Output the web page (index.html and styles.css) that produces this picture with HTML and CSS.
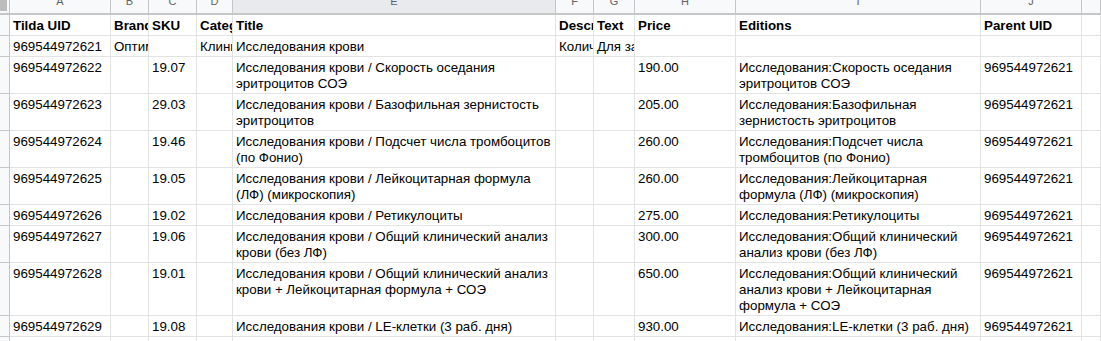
FILE: index.html
```html
<!DOCTYPE html>
<html lang="ru">
<head>
<meta charset="utf-8">
<title>Sheet</title>
<link rel="stylesheet" href="styles.css">
</head>
<body>
<div class="sheet">
  <div class="corner"></div>
  <div class="colhead">A</div><div class="colhead">B</div><div class="colhead">C</div><div class="colhead">D</div><div class="colhead sel">E</div><div class="colhead">F</div><div class="colhead">G</div><div class="colhead">H</div><div class="colhead">I</div><div class="colhead">J</div><div class="colhead"></div>

  <div class="rowhead"></div>
  <div class="c b">Tilda UID</div><div class="c b">Brand</div><div class="c b">SKU</div><div class="c b">Category</div><div class="c b">Title</div><div class="c b">Description</div><div class="c b">Text</div><div class="c b">Price</div><div class="c b">Editions</div><div class="c b">Parent UID</div><div class="c"></div>

  <div class="rowhead"></div>
  <div class="c">969544972621</div><div class="c">Оптимед</div><div class="c"></div><div class="c">Клинические</div><div class="c">Исследования крови</div><div class="c">Количество</div><div class="c">Для заказа</div><div class="c"></div><div class="c"></div><div class="c"></div><div class="c"></div>

  <div class="rowhead"></div>
  <div class="c">969544972622</div><div class="c"></div><div class="c">19.07</div><div class="c"></div><div class="c w">Исследования крови / Скорость оседания эритроцитов СОЭ</div><div class="c"></div><div class="c"></div><div class="c">190.00</div><div class="c w">Исследования:Скорость оседания эритроцитов СОЭ</div><div class="c">969544972621</div><div class="c"></div>

  <div class="rowhead"></div>
  <div class="c">969544972623</div><div class="c"></div><div class="c">29.03</div><div class="c"></div><div class="c w">Исследования крови / Базофильная зернистость эритроцитов</div><div class="c"></div><div class="c"></div><div class="c">205.00</div><div class="c w">Исследования:Базофильная зернистость эритроцитов</div><div class="c">969544972621</div><div class="c"></div>

  <div class="rowhead"></div>
  <div class="c">969544972624</div><div class="c"></div><div class="c">19.46</div><div class="c"></div><div class="c w">Исследования крови / Подсчет числа тромбоцитов (по Фонио)</div><div class="c"></div><div class="c"></div><div class="c">260.00</div><div class="c w">Исследования:Подсчет числа тромбоцитов (по Фонио)</div><div class="c">969544972621</div><div class="c"></div>

  <div class="rowhead"></div>
  <div class="c">969544972625</div><div class="c"></div><div class="c">19.05</div><div class="c"></div><div class="c w">Исследования крови / Лейкоцитарная формула (ЛФ) (микроскопия)</div><div class="c"></div><div class="c"></div><div class="c">260.00</div><div class="c w">Исследования:Лейкоцитарная формула (ЛФ) (микроскопия)</div><div class="c">969544972621</div><div class="c"></div>

  <div class="rowhead"></div>
  <div class="c">969544972626</div><div class="c"></div><div class="c">19.02</div><div class="c"></div><div class="c w">Исследования крови / Ретикулоциты</div><div class="c"></div><div class="c"></div><div class="c">275.00</div><div class="c w">Исследования:Ретикулоциты</div><div class="c">969544972621</div><div class="c"></div>

  <div class="rowhead"></div>
  <div class="c">969544972627</div><div class="c"></div><div class="c">19.06</div><div class="c"></div><div class="c w">Исследования крови / Общий клинический анализ крови (без ЛФ)</div><div class="c"></div><div class="c"></div><div class="c">300.00</div><div class="c w">Исследования:Общий клинический анализ крови (без ЛФ)</div><div class="c">969544972621</div><div class="c"></div>

  <div class="rowhead"></div>
  <div class="c">969544972628</div><div class="c"></div><div class="c">19.01</div><div class="c"></div><div class="c w">Исследования крови / Общий клинический анализ крови + Лейкоцитарная формула + СОЭ</div><div class="c"></div><div class="c"></div><div class="c">650.00</div><div class="c w">Исследования:Общий клинический анализ крови + Лейкоцитарная формула + СОЭ</div><div class="c">969544972621</div><div class="c"></div>

  <div class="rowhead"></div>
  <div class="c">969544972629</div><div class="c"></div><div class="c">19.08</div><div class="c"></div><div class="c w">Исследования крови / LE-клетки (3 раб. дня)</div><div class="c"></div><div class="c"></div><div class="c">930.00</div><div class="c w">Исследования:LE-клетки (3 раб. дня)</div><div class="c">969544972621</div><div class="c"></div>

  <div class="rowhead"></div>
  <div class="c"></div><div class="c"></div><div class="c"></div><div class="c"></div><div class="c"></div><div class="c"></div><div class="c"></div><div class="c"></div><div class="c"></div><div class="c"></div><div class="c"></div>
</div>
</body>
</html>
```

FILE: styles.css
```css
html, body {
  margin: 0;
  padding: 0;
  background: #ffffff;
  overflow: hidden;
}

.sheet {
  display: grid;
  grid-template-columns: 10px 101px 38px 48px 36px 323px 38px 41px 101px 245px 101px 1fr;
  margin-top: -9px;
  font-family: "Liberation Sans", Arial, sans-serif;
  font-size: 13.333px;
  color: #000000;
}

.sheet > div {
  box-sizing: border-box;
  overflow: hidden;
}

.corner {
  height: 24px;
  background:
    linear-gradient(to right, #bdbdbd 7px, #f8f9fa 7px);
  border-right: 1px solid #c4c7c5;
  border-bottom: 2px solid #c4c7c5;
  box-shadow: inset 0 -2px 0 #f8f9fa;
}

.colhead {
  height: 24px;
  background: #f8f9fa;
  border-right: 1px solid #c4c7c5;
  border-bottom: 2px solid #c4c7c5;
  color: #5f6368;
  font-size: 11px;
  line-height: 20px;
  text-align: center;
}

.colhead.sel {
  background: #e8eaed;
}

.rowhead {
  background: #f8f9fa;
  border-right: 1px solid #c4c7c5;
  border-bottom: 1px solid #c4c7c5;
}

.c {
  border-right: 1px solid #e2e3e3;
  border-bottom: 1px solid #e2e3e3;
  padding: 3px 3px 1px 3px;
  line-height: 16px;
  min-height: 21px;
  white-space: nowrap;
}

.c.w {
  white-space: normal;
}

.c.b {
  font-weight: bold;
}
```
